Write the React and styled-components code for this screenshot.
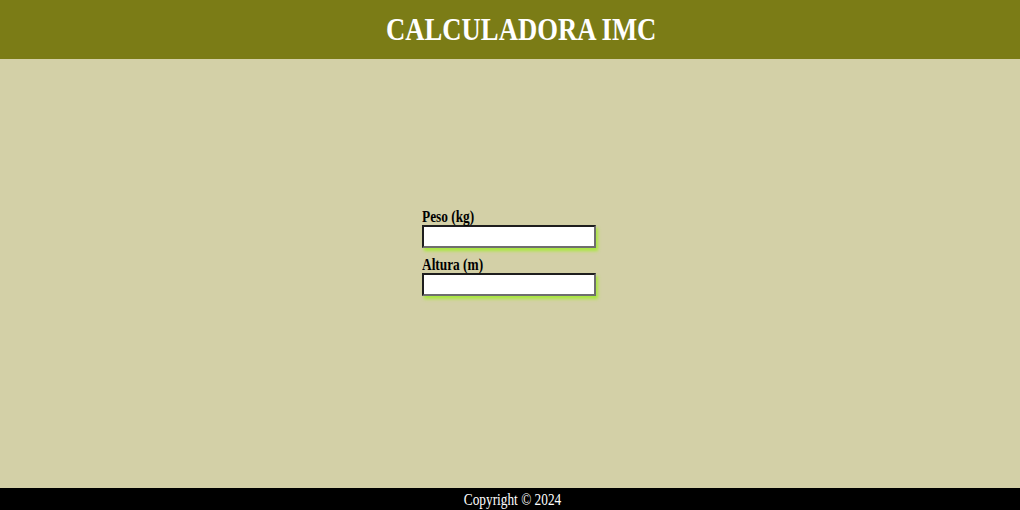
import React from 'react'
import styled, { createGlobalStyle } from 'styled-components'

const GlobalStyle = createGlobalStyle`
    html, body {
        margin: 0;
        padding: 0;
    }
    body {
        font-family: "Liberation Serif", "Times New Roman", serif;
        font-size: 16px;
        background: #d3d0a7;
    }
`

const Page = styled.div`
    display: flex;
    flex-direction: column;
    min-height: 100vh;
`

const Header = styled.header`
    height: 59px;
    background: #7b7c16;
    display: flex;
    align-items: center;
    justify-content: center;
    padding-left: 22px;
`

// the screenshot's text is narrower than Times at its height
const Narrow = styled.span`
    display: inline-block;
    transform: scaleX(0.833);
    transform-origin: ${(p) => (p.left ? 'left' : 'center')};
`

const Title = styled.h1`
    margin: 0;
    color: white;
    font-size: 32px;
    font-weight: bold;
`

const Main = styled.main`
    flex: 1;
    display: flex;
    align-items: center;
    justify-content: center;
`

const Form = styled.form`
    display: flex;
    flex-direction: column;
    padding-bottom: 44px;
    margin-right: 2px;
`

const Field = styled.div`
    display: flex;
    flex-direction: column;
    & + & {
        margin-top: 7px;
    }
`

const Label = styled.label`
    font-size: 16px;
    font-weight: bold;
    color: black;
    line-height: 17px;
    padding-top: 1px;
    white-space: nowrap;
`

const Input = styled.input`
    box-sizing: border-box;
    width: 174px;
    height: 23px;
    padding: 1px 2px;
    background: white;
    border: 2px solid;
    border-color: #1e1e1e #6e6e6e #6e6e6e #1e1e1e;
    box-shadow: 2px 3px 3px #a9e83e;
    outline: none;
`

const Footer = styled.footer`
    box-sizing: border-box;
    height: 22px;
    background: black;
    color: white;
    font-size: 16px;
    display: flex;
    align-items: center;
    justify-content: center;
    padding: 2px 0 0 6px;
`

export default function App() {
    return (
        <Page>
            <GlobalStyle />
            <Header>
                <Title><Narrow>CALCULADORA IMC</Narrow></Title>
            </Header>
            <Main>
                <Form>
                    <Field>
                        <Label htmlFor="peso"><Narrow left>Peso (kg)</Narrow></Label>
                        <Input id="peso" type="text" />
                    </Field>
                    <Field>
                        <Label htmlFor="altura"><Narrow left>Altura (m)</Narrow></Label>
                        <Input id="altura" type="text" />
                    </Field>
                </Form>
            </Main>
            <Footer><Narrow>Copyright © 2024</Narrow></Footer>
        </Page>
    )
}
